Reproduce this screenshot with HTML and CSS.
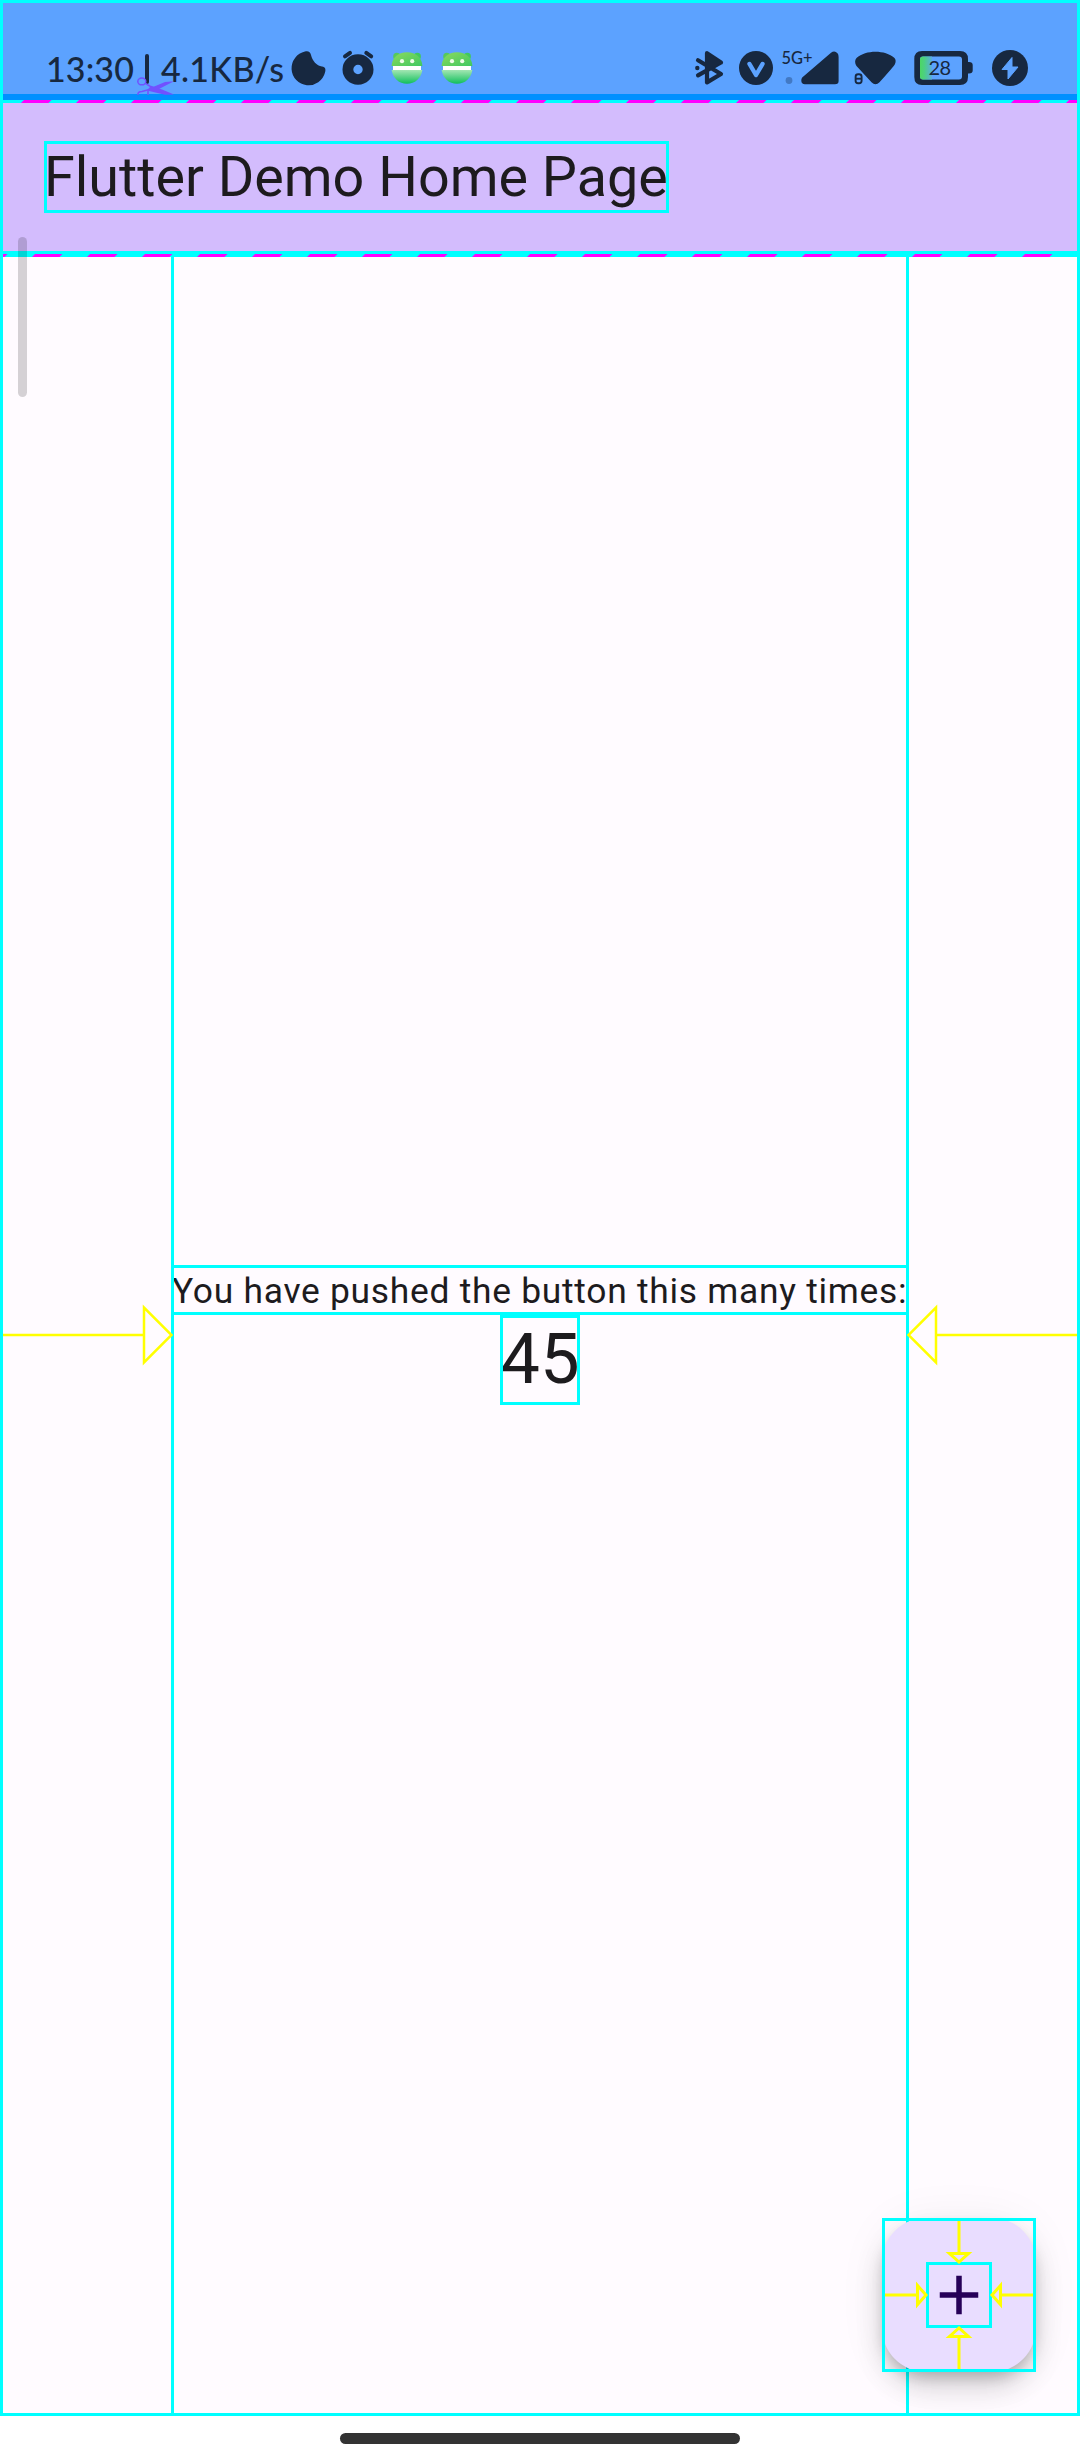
FILE: index.html
```html
<!DOCTYPE html>
<html lang="en">
<head>
<meta charset="utf-8">
<title>Flutter Demo Home Page</title>
<link rel="stylesheet" href="styles.css">
</head>
<body>
<div class="screen">
  <div class="app">
    <header class="status">
      <span class="clock">13:30</span><span class="divider"></span><span class="speed">4.1KB/s</span>
      <svg class="ico" width="46" height="91" viewBox="288 3 46 91"><path d="M305 51.6C308 50.6 310.5 52 311 55C312.5 61 316.5 65.5 322 66.5C325.5 67 326 69.5 325 72.5A17 17 0 1 1 305 51.6Z"/></svg>
      <svg class="ico" width="46" height="91" viewBox="334 3 46 91"><path fill-rule="evenodd" d="M342.5 69.5a15.5 15.2 0 1 0 31 0a15.5 15.2 0 1 0-31 0ZM353.3 69.5a4.7 4.7 0 1 1 9.4 0a4.7 4.7 0 1 1-9.4 0Z"/><path class="line" stroke-width="4" d="M345 56.3L350 52.8M366.3 52.8L371.2 56.3"/></svg>
      <svg class="ico" width="100" height="91" viewBox="380 3 100 91">
        <defs>
          <linearGradient id="top" x1="0" y1="0" x2="1" y2="1"><stop offset="0" stop-color="#8ddb5c"/><stop offset="1" stop-color="#3fc862"/></linearGradient>
          <linearGradient id="low" x1="0" y1="0" x2="0" y2="1"><stop offset="0" stop-color="#a3e6b3"/><stop offset="1" stop-color="#10bf5b"/></linearGradient>
          <g id="face">
            <circle cx="396.8" cy="56.4" r="3.6" fill="#55c95d"/><circle cx="417.3" cy="56.4" r="3.6" fill="#42c85e"/>
            <path d="M391.6 66C392 57.500 398 52.200 407 52.200S422 57.500 422.400 66Z" fill="url(#top)"/>
            <path d="M391.600 70C393 78.500 399 83.800 407 83.800S421 78.500 422.400 70Z" fill="url(#low)"/>
            <path d="M393 66h28v4h-28Z" fill="#fff"/>
            <circle cx="402" cy="61.2" r="2.1" fill="#effbe9"/><circle cx="412.2" cy="61.2" r="2.1" fill="#effbe9"/>
          </g>
        </defs>
        <use href="#face"/><use href="#face" x="50"/>
      </svg>
      <span class="grow"></span>
      <svg class="ico" width="44" height="91" viewBox="688 3 44 91"><path class="line" stroke-width="4.2" d="M698 60.3L721 74L707 82.4V53.2L721 62.5L698 75.3"/><path d="M706 52L722 62.5L706 72Z"/><circle cx="697.3" cy="68" r="2.2"/></svg>
      <svg class="ico" width="48" height="91" viewBox="732 3 48 91"><circle cx="756" cy="68" r="17"/><path class="cut" d="M749.5 64L756 75L762.5 64"/></svg>
      <svg class="ico" width="70" height="91" viewBox="780 3 70 91"><text class="net" x="781.5" y="63.5" textLength="31" lengthAdjust="spacingAndGlyphs">5G+</text><circle cx="789" cy="80.5" r="3.4" fill="#4279c4"/><path d="M802.2 77.5L831 52.8Q834.5 50 837.5 53.2Q838.6 54.5 838.6 57V81Q838.6 84.3 835 84.3H805Q801.3 84.3 801.3 80.5Q801.2 78.8 802.2 77.5Z"/></svg>
      <svg class="ico" width="56" height="91" viewBox="850 3 56 91"><path d="M856.5 58C866 49.8 885 49.8 894.5 58Q896.5 60.5 895 64Q894.2 66 879.5 82.3Q875.5 86 871.5 82.3L856.5 66Q853.7 61.5 856.5 58Z"/><g fill="none" stroke="#5ca2ff" stroke-width="4"><rect x="855.6" y="74.2" width="6" height="9" rx="2.5"/></g><g fill="none" stroke="#172840" stroke-width="1.9"><rect x="855.6" y="74.2" width="6" height="9" rx="2.5"/><path d="M855 78.7h7"/></g></svg>
      <svg class="ico" width="76" height="91" viewBox="906 3 76 91"><defs><linearGradient id="charge"><stop offset="0" stop-color="#4cd764"/><stop offset=".35" stop-color="#4cd080"/><stop offset="1" stop-color="#5bacdf"/></linearGradient></defs><path fill-rule="evenodd" d="M922 51H960Q968 51 968 59V62H969Q972.7 62 972.7 65V70.5Q972.7 73.5 969 73.5H968V77Q968 85 960 85H922Q914.3 85 914.3 77V59Q914.3 51 922 51ZM923 56.5Q920 56.5 920 59.5V76.5Q920 79.5 923 79.5H959Q962 79.5 962 76.5V59.5Q962 56.5 959 56.5Z"/><path d="M932 56.5H923Q920 56.5 920 59.5V76.5Q920 79.5 923 79.5H932Z" fill="url(#charge)"/><text class="pct" x="928.5" y="75" textLength="22.5">28</text></svg>
      <svg class="ico" width="95" height="91" viewBox="982 3 95 91"><circle cx="1010" cy="68" r="18"/><path fill="#5ca2ff" stroke="#5ca2ff" stroke-width="1" stroke-linejoin="round" d="M1012 57.5L1002 69.5H1008V79L1018 67H1012Z"/></svg>
      <svg class="scissors" width="42" height="20" viewBox="134 75 42 20"><g fill="none" stroke="#7151ff" stroke-width="1.5"><ellipse cx="141.8" cy="81.4" rx="4" ry="3.4"/><path d="M145 83.2L153 88"/><path d="M138 95Q137.5 91.5 142 91.5L152 88.8M148 91V95"/></g><path fill="#7151ff" d="M150 88.2L165 82L174 81.2L156 90.5Z"/><path fill="#7151ff" d="M147 90.5L151 85.8L162 89.5L174 94.5L165 94.8Z"/></svg>
    </header>
    <div class="edge"></div>
    <svg class="dashes" width="1074" height="3" viewBox="3 0 1074 3"><defs><pattern id="dashA" width="55" height="3" patternUnits="userSpaceOnUse"><path d="M21 3L24 0H51.5L48.5 3Z" fill="#f0f"/></pattern></defs><rect x="3" width="1074" height="3" fill="url(#dashA)"/></svg>
    <div class="appbar"><h1 class="title guide">Flutter Demo Home Page</h1></div>
    <div class="rule"></div>
    <svg class="dashes" width="1074" height="3" viewBox="3 0 1074 3"><defs><pattern id="dashB" x="-33" width="55" height="3" patternUnits="userSpaceOnUse"><path d="M10 3L13 0H40.5L37.5 3Z" fill="#f0f"/></pattern></defs><rect x="3" width="1074" height="3" fill="url(#dashB)"/></svg>
    <main class="body">
      <svg class="arrow" width="170" height="64" viewBox="3 0 170 64"><path d="M3 32H144M144 4.5V59.5L171.5 32Z"/></svg>
      <div class="column">
        <p class="label guide">You have pushed the button this many times:</p>
        <p class="count guide">45</p>
      </div>
      <svg class="arrow" width="170" height="64" viewBox="907 0 170 64"><path d="M1077 32H936M936 4.5V59.5L908.5 32Z"/></svg>
    </main>
  </div>
  <div class="nav"><div class="handle"></div></div>
  <div class="scrollbar"></div>
  <button class="fab" aria-label="Increment">
    <svg class="plus guide" width="66" height="66" viewBox="0 0 24 24"><path d="M19 13h-6v6h-2v-6H5v-2h6V5h2v6h6v2z"/></svg>
    <svg class="pointers" width="154" height="154" viewBox="882 2218 154 154"><g id="pair"><path d="M885 2295H916.5M917.5 2285.5V2304.5L926 2295Z"/><path d="M1033 2295H1001.500M1000.500 2285.500V2304.500L992 2295Z"/></g><use href="#pair" transform="rotate(90 959 2295)"/></svg>
  </button>
</div>
</body>
</html>
```
FILE: styles.css
```css
* { box-sizing: border-box; }
body { margin: 0; background: #fff; }
h1, p { margin: 0; font-weight: 400; white-space: nowrap; }
svg { display: block; flex: none; }

.screen { position: relative; width: 1080px; height: 2460px; display: flex; flex-direction: column; font-family: Roboto, sans-serif; color: #1d1b1e; }
.app { height: 2416px; border: 3px solid #0ff; display: flex; flex-direction: column; background: #fffbff; }
.guide { outline: 3px solid #0ff; outline-offset: -3px; }

.status { position: relative; flex: none; height: 91px; display: flex; background: #5ca2ff; color: #172840; font: 500 34px/91px Lato, sans-serif; padding-left: 43px; }
.clock { width: 99px; padding-top: 20px; letter-spacing: 0.1px; }
.divider { width: 4px; height: 30px; margin-top: 51px; background: #172840; border-radius: 2px; }
.speed { width: 139px; padding: 20px 0 0 12px; letter-spacing: 0.3px; }
.grow { flex: 1; }
.ico { fill: #172840; }
.line { fill: none; stroke: #172840; stroke-linecap: round; stroke-linejoin: round; }
.cut { fill: none; stroke: #5ca2ff; stroke-width: 4.4; stroke-linecap: round; stroke-linejoin: round; }
.net { font: 500 18px Lato, sans-serif; }
.pct { font: 400 20px Lato, sans-serif; }
.scissors { position: absolute; left: 131px; top: 72px; }

.edge { flex: none; height: 6px; background: #0090ff; }
.dashes { background: #0ff; }
.rule { flex: none; height: 3px; background: #0ff; }
.appbar { flex: none; height: 148px; display: flex; align-items: center; padding-left: 41px; background: #d3bcfd; }
.title { width: 625px; height: 72px; font-size: 55.7px; line-height: 72px; }

.body { flex: 1; display: grid; grid-template-columns: 168px 738px 168px; align-items: center; }
.arrow { fill: none; stroke: #ff0; stroke-width: 2.5; position: relative; z-index: 1; }
.arrow:last-child { justify-self: end; }
.column { height: 100%; display: flex; flex-direction: column; justify-content: center; align-items: center; border: solid #0ff; border-width: 0 3px; }
.label { width: 738px; height: 50px; margin: 0 -3px; padding-left: 1px; font-size: 35.4px; line-height: 52px; letter-spacing: 0.72px; }
.count { width: 80px; height: 90px; font-size: 70.6px; line-height: 88px; text-align: center; }

.nav { height: 44px; background: #fff; display: flex; justify-content: center; padding-top: 17px; }
.handle { width: 400px; height: 10.5px; border-radius: 6px; background: #333; }
.scrollbar { position: absolute; left: 18px; top: 237px; width: 9px; height: 160px; border-radius: 5px; background: rgba(0, 0, 0, 0.165); }

.fab { position: absolute; right: 44px; bottom: 88px; width: 154px; height: 154px; padding: 0; border: 0; border-radius: 44px; background: #e9ddff; display: grid; place-items: center; box-shadow: 0 8px 14px -3px rgba(0, 0, 0, 0.2), 0 16px 28px rgba(0, 0, 0, 0.14), 0 3px 50px rgba(0, 0, 0, 0.06); }
.plus { fill: #260058; }
.pointers { position: absolute; inset: 0; z-index: 1; fill: none; stroke: #ff0; stroke-width: 3; }
.fab::after { content: ""; position: absolute; inset: 0; border: 3px solid #0ff; }
```
